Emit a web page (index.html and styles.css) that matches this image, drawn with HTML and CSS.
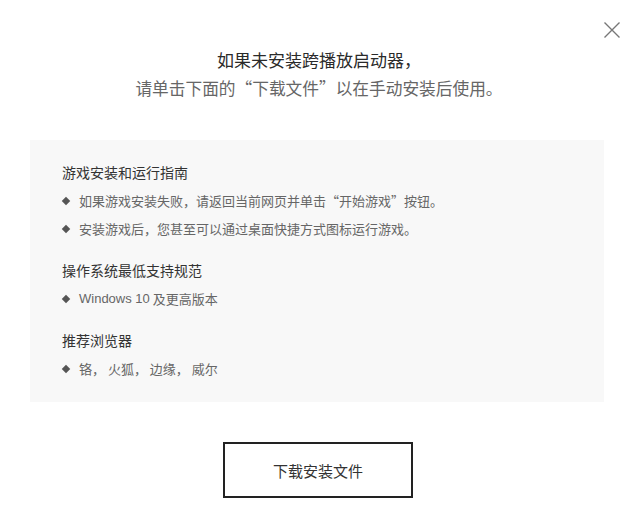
FILE: index.html
```html
<!DOCTYPE html>
<html lang="zh-CN">
<head>
<meta charset="utf-8">
<title>下载安装文件</title>
<link rel="stylesheet" href="styles.css">
</head>
<body>
<div class="dialog">
  <button class="close" aria-label="关闭">
    <svg width="18" height="18" viewBox="0 0 18 18"><path d="M1.5 1.5 L16.5 16.5 M16.5 1.5 L1.5 16.5" stroke="#777" stroke-width="1.4" fill="none"/></svg>
  </button>
  <div class="intro">
    <p class="line1">如果未安装跨播放启动器，</p>
    <p class="line2">请单击下面的“下载文件”以在手动安装后使用。</p>
  </div>
  <div class="panel">
    <section class="group">
      <h3>游戏安装和运行指南</h3>
      <ul>
        <li>如果游戏安装失败，请返回当前网页并单击“开始游戏”按钮。</li>
        <li>安装游戏后，您甚至可以通过桌面快捷方式图标运行游戏。</li>
      </ul>
    </section>
    <section class="group">
      <h3>操作系统最低支持规范</h3>
      <ul>
        <li><span class="latin">Windows 10</span>&nbsp;及更高版本</li>
      </ul>
    </section>
    <section class="group">
      <h3>推荐浏览器</h3>
      <ul>
        <li>铬， 火狐， 边缘， 威尔</li>
      </ul>
    </section>
  </div>
  <div class="actions">
    <button class="download">下载安装文件</button>
  </div>
</div>
</body>
</html>
```
FILE: styles.css
```css
* { box-sizing: border-box; }
html, body {
  margin: 0;
  padding: 0;
  background: #fff;
}
body {
  font-family: "Noto Sans CJK SC", "Liberation Sans", sans-serif;
  color: #333;
}
.latin {
  font-family: "Liberation Sans", sans-serif;
}
.dialog {
  position: relative;
  width: 640px;
  height: 525px;
  padding: 45px 36px 0 30px;
}
.close {
  position: absolute;
  top: 21px;
  right: 19px;
  width: 18px;
  height: 18px;
  padding: 0;
  border: 0;
  background: none;
  display: flex;
}
.intro {
  text-align: center;
  font-size: 17px;
  line-height: 29px;
  margin-bottom: 37px;
  padding-left: 4px;
}
.intro p { margin: 0; }
.line1 { color: #2a2a2a; }
.line2 { color: #666; font-size: 16.7px; }
.panel {
  background: #f8f8f8;
  width: 574px;
  padding: 22px 32px 23px 32px;
  display: flex;
  flex-direction: column;
  gap: 21px;
}
.group h3 {
  margin: 0;
  font-size: 14px;
  font-weight: normal;
  line-height: 20px;
  color: #333;
}
.group ul {
  list-style: none;
  margin: 9px 0 0 0;
  padding: 0;
  display: flex;
  flex-direction: column;
  gap: 8px;
}
.group li {
  font-size: 13px;
  line-height: 20px;
  color: #666;
  display: flex;
  align-items: center;
}
.group li::before {
  content: "";
  width: 6px;
  height: 6px;
  background: #555;
  transform: rotate(45deg);
  margin: 0 10px 0 1px;
  flex: none;
}
.actions {
  display: flex;
  justify-content: center;
  padding-top: 40px;
  padding-left: 2px;
}
.download {
  width: 190px;
  height: 56px;
  border: 2px solid #222;
  background: #fff;
  font-family: "Noto Sans CJK SC", "Liberation Sans", sans-serif;
  font-size: 15px;
  color: #333;
  cursor: pointer;
}
```
